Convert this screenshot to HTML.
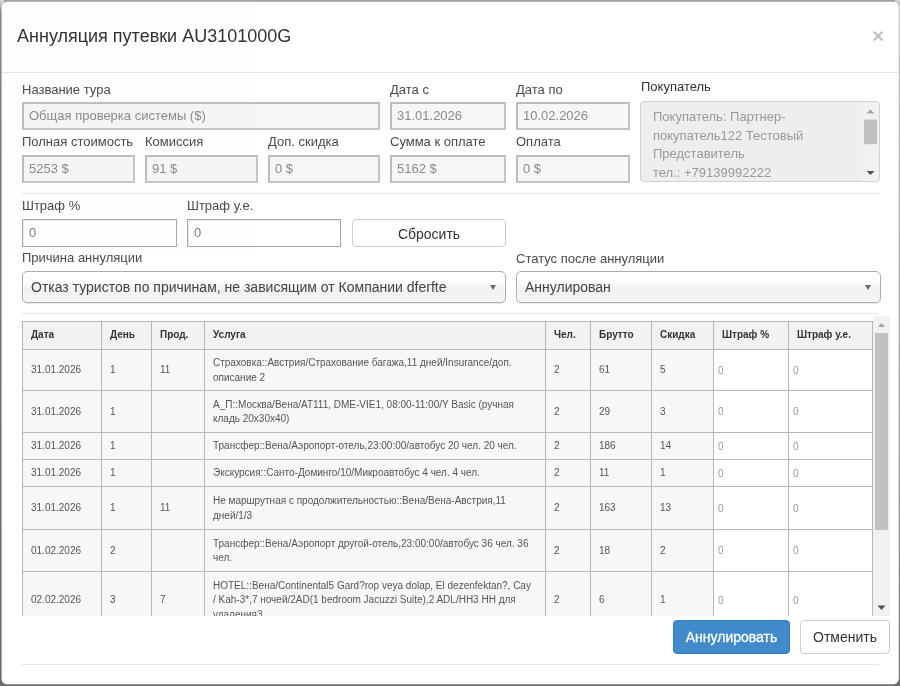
<!DOCTYPE html>
<html><head><meta charset="utf-8">
<style>
*{box-sizing:border-box;margin:0;padding:0}
html,body{width:900px;height:686px;overflow:hidden;background:#d8d8d8;font-family:"Liberation Sans",sans-serif;}
.abs{position:absolute}
.title{left:17px;top:26px;font-size:18px;line-height:21px;color:#333;white-space:nowrap}
.close{left:872px;top:25px;font-size:21px;line-height:21px;font-weight:bold;color:#c2c2c2}
.hr{height:1px;background:#e5e5e5}
.lbl{font-size:13px;line-height:16px;color:#4a4a4a;white-space:nowrap}
.inp{height:28px;border:2px solid;border-color:#bcbcbc #c4c4c4 #c4c4c4 #bcbcbc;background:#f6f6f6;color:#8a8a8a;font-size:13px;line-height:24px;padding-left:5px;white-space:nowrap;overflow:hidden}
.inp.w{background:#fff;border-width:1px;border-color:#a6a6a6;line-height:25px;padding-left:6px;color:#7a7a7a;box-shadow:inset 1px 1px 1px #ececec}

.ta{left:640px;top:101px;width:240px;height:81px;border:1px solid #d0d0d0;border-radius:4px;background:#eee;overflow:hidden}
.ta .t{position:absolute;left:12px;top:6px;font-size:13px;line-height:18.5px;color:#999;white-space:nowrap}
.btn{border:1px solid #ccc;border-radius:4px;background:#fff;color:#333;font-size:14px;text-align:center;white-space:nowrap}
.sel{height:32px;border:1px solid #adadad;border-radius:5px;background:linear-gradient(#fff 20%,#f7f7f7 50%,#f0f0f0 52%,#f4f4f4 100%);box-shadow:0 0 3px #fff inset,0 1px 1px rgba(0,0,0,.1);font-size:14px;line-height:30px;color:#444;padding-left:8px;white-space:nowrap;overflow:hidden}
.sel i{position:absolute;right:9px;top:13px;width:0;height:0;border-left:3px solid transparent;border-right:3px solid transparent;border-top:5px solid #6a6a6a}

.sc{left:22px;top:316px;width:868px;height:300px;overflow:hidden}
.sb{left:851px;top:0;width:17px;height:300px;background:#f1f1f1}
table{position:absolute;left:0;top:5px;border-collapse:collapse;table-layout:fixed;width:850px;font-size:10px;line-height:14.3px;color:#555}
th,td{border:1px solid #b7b7b7;padding:1px 4px 0 8px;text-align:left;vertical-align:middle;overflow:hidden}
th{background:#f2f2f2;font-weight:bold;color:#333;height:28px;padding-top:0}
td{background:#f7f7f7}
td.w{background:#fff;color:#999;padding-top:2px;padding-left:4px}
</style></head><body>
<div id="wrap" style="position:absolute;left:0;top:0;width:900px;height:686px;will-change:transform;opacity:.999">
<svg id="frame" class="abs" style="left:0;top:0" width="900" height="686" viewBox="0 0 900 686">
<defs>
<linearGradient id="bg" x1="0" y1="0" x2="0" y2="1"><stop offset="0" stop-color="#dadada"/><stop offset="0.006" stop-color="#c4c4c4"/><stop offset="0.016" stop-color="#8a8a8a"/><stop offset="0.2" stop-color="#7c7c7c"/><stop offset="1" stop-color="#6c6c6c"/></linearGradient>
<linearGradient id="rt" x1="0" y1="0" x2="0" y2="1"><stop offset="0" stop-color="#c8c8c8"/><stop offset="0.5" stop-color="#a8a8a8"/><stop offset="1" stop-color="#808080"/></linearGradient>
</defs>
<rect x="0" y="0" width="900" height="686" fill="url(#bg)"/>
<rect x="897" y="3" width="3" height="677" fill="url(#rt)"/>
<rect x="4" y="0" width="891" height="3" fill="#a1a1a1"/>
<rect x="1.6" y="1.8" width="897.1" height="682.5" rx="5.5" fill="#fff"/>
</svg>
<div class="abs title">Аннуляция путевки AU3101000G</div>
<div class="abs close">×</div>
<div class="abs hr" style="left:2px;top:72px;width:896px"></div>

<div class="abs lbl" style="left:22px;top:82px">Название тура</div>
<div class="abs inp" style="left:22px;top:102px;width:358px">Общая проверка системы ($)</div>
<div class="abs lbl" style="left:390px;top:82px">Дата с</div>
<div class="abs inp" style="left:390px;top:102px;width:116px">31.01.2026</div>
<div class="abs lbl" style="left:516px;top:82px">Дата по</div>
<div class="abs inp" style="left:516px;top:102px;width:114px">10.02.2026</div>

<div class="abs lbl" style="left:22px;top:134px">Полная стоимость</div>
<div class="abs inp" style="left:22px;top:155px;width:113px">5253 $</div>
<div class="abs lbl" style="left:145px;top:134px">Комиссия</div>
<div class="abs inp" style="left:145px;top:155px;width:113px">91 $</div>
<div class="abs lbl" style="left:268px;top:134px">Доп. скидка</div>
<div class="abs inp" style="left:268px;top:155px;width:112px">0 $</div>
<div class="abs lbl" style="left:390px;top:134px">Сумма к оплате</div>
<div class="abs inp" style="left:390px;top:155px;width:116px">5162 $</div>
<div class="abs lbl" style="left:516px;top:134px">Оплата</div>
<div class="abs inp" style="left:516px;top:155px;width:114px">0 $</div>

<div class="abs hr" style="left:22px;top:193px;width:857px"></div>

<div class="abs lbl" style="left:641px;top:79px;color:#333">Покупатель</div>
<div class="abs ta"><div class="t">Покупатель: Партнер-<br>покупатель122 Тестовый<br>Представитель<br>тел.: +79139992222</div>
  <div class="abs" style="left:221px;top:0;width:17px;height:79px;background:#f1f1f1"></div>
  <svg class="abs" style="left:221px;top:0" width="17" height="79" viewBox="0 0 17 79"><path d="M4.5 11.5 L8.5 7.5 L12.5 11.5Z" fill="#a3a3a3"/><rect x="2" y="17.6" width="13" height="24.6" fill="#c1c1c1"/><path d="M4.5 69 L12.5 69 L8.5 73Z" fill="#505050"/></svg>
</div>

<div class="abs lbl" style="left:22px;top:198px">Штраф %</div>
<div class="abs inp w" style="left:22px;top:219px;width:155px">0</div>
<div class="abs lbl" style="left:187px;top:198px">Штраф у.е.</div>
<div class="abs inp w" style="left:187px;top:219px;width:154px">0</div>
<div class="abs btn" style="left:352px;top:219px;width:154px;height:28px;line-height:28px">Сбросить</div>

<div class="abs lbl" style="left:22px;top:250px">Причина аннуляции</div>
<div class="abs sel" style="left:22px;top:271px;width:484px">Отказ туристов по причинам, не зависящим от Компании dferfte<i></i></div>
<div class="abs lbl" style="left:516px;top:251px">Статус после аннуляции</div>
<div class="abs sel" style="left:516px;top:271px;width:365px">Аннулирован<i></i></div>

<div class="abs hr" style="left:22px;top:313px;width:857px"></div>
<div class="abs sc"><table><colgroup><col style="width:79px"><col style="width:50px"><col style="width:53px"><col style="width:341px"><col style="width:45px"><col style="width:61px"><col style="width:62px"><col style="width:75px"><col style="width:84px"></colgroup>
<tr><th>Дата</th><th>День</th><th>Прод.</th><th>Услуга</th><th>Чел.</th><th>Брутто</th><th>Скидка</th><th>Штраф %</th><th>Штраф у.е.</th></tr>
<tr style="height:41px"><td>31.01.2026</td><td>1</td><td>11</td><td>Страховка::Австрия/Страхование багажа,11 дней/Insurance/доп.<br>описание 2</td><td>2</td><td>61</td><td>5</td><td class="w">0</td><td class="w">0</td></tr>
<tr style="height:42px"><td>31.01.2026</td><td>1</td><td></td><td>А_П::Москва/Вена/AT111, DME-VIE1, 08:00-11:00/Y Basic (ручная<br>кладь 20x30x40)</td><td>2</td><td>29</td><td>3</td><td class="w">0</td><td class="w">0</td></tr>
<tr style="height:27px"><td>31.01.2026</td><td>1</td><td></td><td>Трансфер::Вена/Аэропорт-отель,23:00:00/автобус 20 чел. 20 чел.</td><td>2</td><td>186</td><td>14</td><td class="w">0</td><td class="w">0</td></tr>
<tr style="height:27px"><td>31.01.2026</td><td>1</td><td></td><td>Экскурсия::Санто-Доминго/10/Микроавтобус 4 чел. 4 чел.</td><td>2</td><td>11</td><td>1</td><td class="w">0</td><td class="w">0</td></tr>
<tr style="height:43px"><td>31.01.2026</td><td>1</td><td>11</td><td>Не маршрутная с продолжительностью::Вена/Вена-Австрия,11<br>дней/1/3</td><td>2</td><td>163</td><td>13</td><td class="w">0</td><td class="w">0</td></tr>
<tr style="height:42px"><td>01.02.2026</td><td>2</td><td></td><td>Трансфер::Вена/Аэропорт другой-отель,23:00:00/автобус 36 чел. 36<br>чел.</td><td>2</td><td>18</td><td>2</td><td class="w">0</td><td class="w">0</td></tr>
<tr style="height:57px"><td>02.02.2026</td><td>3</td><td>7</td><td>HOTEL::Вена/Continental5 Gard?rop veya dolap, El dezenfektan?, Cay<br>/ Kah-3*,7 ночей/2AD(1 bedroom Jacuzzi Suite),2 ADL/HH3 HH для<br>удаления3</td><td>2</td><td>6</td><td>1</td><td class="w">0</td><td class="w">0</td></tr>
</table>
<div class="abs sb"><svg width="17" height="300" viewBox="0 0 17 300"><path d="M5 11 L8.5 7 L12 11Z" fill="#a3a3a3"/><rect x="2" y="17" width="13" height="197" fill="#c1c1c1"/><path d="M4.5 289.5 L12.5 289.5 L8.5 294Z" fill="#505050"/></svg></div></div>

<div class="abs btn" style="left:673px;top:620px;width:117px;height:34px;line-height:32px;background:#428bca;border-color:#357ebd;color:#fff;-webkit-text-stroke:0.3px #fff">Аннулировать</div>
<div class="abs btn" style="left:800px;top:620px;width:90px;height:34px;line-height:32px">Отменить</div>
<div class="abs hr" style="left:22px;top:664px;width:857px"></div>
</div>
</body></html>
